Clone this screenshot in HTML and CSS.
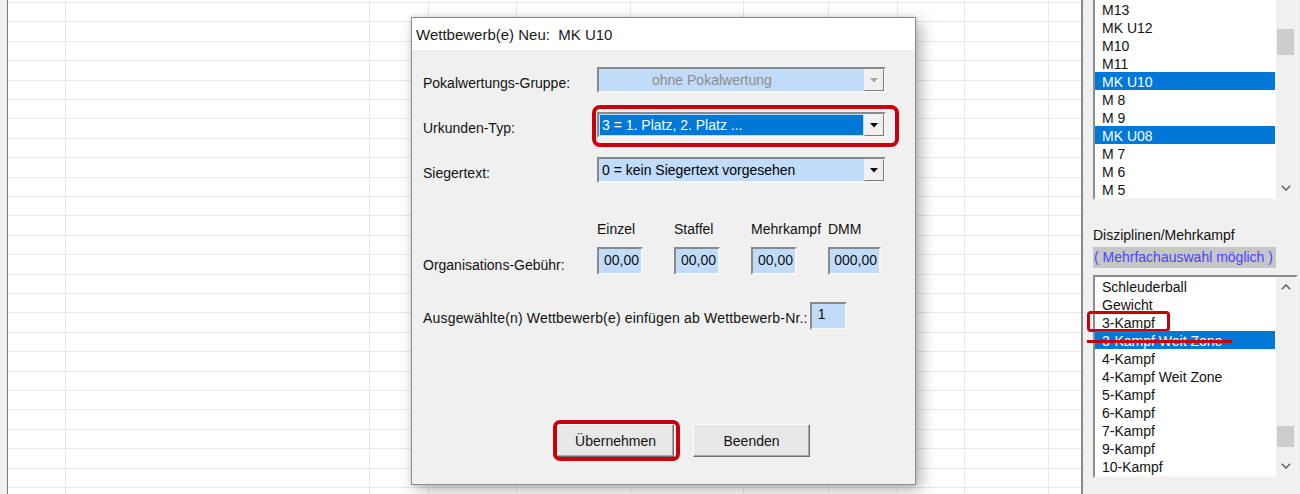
FILE: index.html
```html
<!DOCTYPE html>
<html lang="de">
<head>
<meta charset="utf-8">
<title>Wettbewerb(e) Neu</title>
<link rel="stylesheet" href="styles.css">
</head>
<body>
<div class="app">
  <div class="strip"></div>
  <div class="sheet">
    <div class="col w58"></div>
    <div class="col w304"></div>
    <div class="col w59"></div>
    <div class="col w88"></div>
    <div class="col w114"></div>
    <div class="col w113"></div>
    <div class="col w85"></div>
    <div class="col w69"></div>
    <div class="col w67"></div>
    <div class="col w84"></div>
    <div class="col rest"></div>
  </div>

  <aside class="panel">
    <div class="listbox top-list">
      <ul class="items">
        <li>M13</li>
        <li>MK U12</li>
        <li>M10</li>
        <li>M11</li>
        <li class="sel">MK U10</li>
        <li>M 8</li>
        <li>M 9</li>
        <li class="sel">MK U08</li>
        <li>M 7</li>
        <li>M 6</li>
        <li>M 5</li>
      </ul>
      <div class="scrollbar">
        <div class="track">
          <div class="thumb" style="margin-top:29px;height:26px"></div>
        </div>
        <div class="sb-btn"><svg width="10" height="6" viewBox="0 0 10 6"><polyline points="0.8,0.8 5,5 9.2,0.8" fill="none" stroke="#606060" stroke-width="1.5"/></svg></div>
      </div>
    </div>

    <div class="panel-label">Disziplinen/Mehrkampf</div>
    <div class="hint">( Mehrfachauswahl möglich )</div>

    <div class="listbox bottom-list">
      <ul class="items">
        <li>Schleuderball</li>
        <li>Gewicht</li>
        <li class="marked">3-Kampf<span class="mark mark-item"></span></li>
        <li class="sel">3-Kampf Weit Zone<span class="mark-line"></span></li>
        <li>4-Kampf</li>
        <li>4-Kampf Weit Zone</li>
        <li>5-Kampf</li>
        <li>6-Kampf</li>
        <li>7-Kampf</li>
        <li>9-Kampf</li>
        <li>10-Kampf</li>
      </ul>
      <div class="scrollbar">
        <div class="sb-btn"><svg width="10" height="6" viewBox="0 0 10 6"><polyline points="0.8,5.2 5,1 9.2,5.2" fill="none" stroke="#606060" stroke-width="1.5"/></svg></div>
        <div class="track">
          <div class="thumb" style="margin-top:129px;height:21px"></div>
        </div>
        <div class="sb-btn"><svg width="10" height="6" viewBox="0 0 10 6"><polyline points="0.8,0.8 5,5 9.2,0.8" fill="none" stroke="#606060" stroke-width="1.5"/></svg></div>
      </div>
    </div>
  </aside>

  <div class="dialog">
    <div class="titlebar">Wettbewerb(e) Neu:&nbsp; MK U10</div>
    <div class="dialog-body">
      <div class="row">
        <span class="label">Pokalwertungs-Gruppe:</span>
        <div class="combo disabled">
          <span class="combo-text centered">ohne Pokalwertung</span>
          <span class="combo-btn"><svg width="8" height="5" viewBox="0 0 8 5"><polygon points="0,0 8,0 4,4.5" fill="#a6a6a6"/></svg></span>
        </div>
      </div>
      <div class="row">
        <span class="label">Urkunden-Typ:</span>
        <div class="combo">
          <span class="combo-text selected">3 = 1. Platz, 2. Platz ...</span>
          <span class="combo-btn"><svg width="8" height="5" viewBox="0 0 8 5"><polygon points="0,0 8,0 4,4.5" fill="#000"/></svg></span>
          <span class="mark mark-combo"></span>
        </div>
      </div>
      <div class="row">
        <span class="label">Siegertext:</span>
        <div class="combo">
          <span class="combo-text">0 = kein Siegertext vorgesehen</span>
          <span class="combo-btn"><svg width="8" height="5" viewBox="0 0 8 5"><polygon points="0,0 8,0 4,4.5" fill="#000"/></svg></span>
        </div>
      </div>

      <div class="fees">
        <span></span>
        <span class="fee-head">Einzel</span>
        <span class="fee-head">Staffel</span>
        <span class="fee-head">Mehrkampf</span>
        <span class="fee-head">DMM</span>
        <span class="label fee-label">Organisations-Gebühr:</span>
        <span class="field fee">00,00</span>
        <span class="field fee">00,00</span>
        <span class="field fee">00,00</span>
        <span class="field fee wide">000,00</span>
      </div>

      <div class="insert-row">
        <span class="label long">Ausgewählte(n) Wettbewerb(e) einfügen ab Wettbewerb-Nr.:</span>
        <span class="field nr">1</span>
      </div>

      <div class="buttons">
        <div class="btn">Übernehmen<span class="mark mark-btn"></span></div>
        <div class="btn">Beenden</div>
      </div>
    </div>
  </div>
</div>
</body>
</html>
```

FILE: styles.css
```css
* { box-sizing: border-box; }

html, body {
  margin: 0;
  padding: 0;
  width: 1300px;
  height: 494px;
  overflow: hidden;
  background: #f0f0f0;
  font-family: "Liberation Sans", Arial, sans-serif;
  font-size: 14px;
  color: #000;
}

.app {
  position: relative;
  display: flex;
  width: 1300px;
  height: 494px;
}

/* ---------- spreadsheet background ---------- */
.strip {
  width: 8px;
  flex: none;
  background: #f0f0f0;
  border-right: 1px solid #7a7a7a;
}

.sheet {
  flex: none;
  width: 1073px;
  display: flex;
  background-color: #fff;
  background-image: repeating-linear-gradient(to bottom,
      transparent 0, transparent 2px,
      #e9e9e9 2px, #e9e9e9 3px,
      transparent 3px, transparent 19.4px);
}

.col { flex: none; height: 100%; border-right: 1px solid #e8e8e8; }
.w58 { width: 58px; }
.w304 { width: 304px; }
.w59 { width: 59px; }
.w88 { width: 88px; }
.w114 { width: 114px; }
.w113 { width: 113px; }
.w85 { width: 85px; }
.w69 { width: 69px; }
.w67 { width: 67px; }
.w84 { width: 84px; }
.rest { flex: 1; border-right: 0; }

/* ---------- right panel ---------- */
.panel {
  position: relative;
  flex: none;
  width: 219px;
  border-left: 2px solid #8a8a8a;
  background: #f0f0f0;
  padding-left: 10px;
  display: flex;
  flex-direction: column;
}

.listbox {
  position: relative;
  width: 205px;
  display: flex;
  background: #fff;
  border: 2px solid;
  border-color: #8c8c8c #f4f4f4 #f4f4f4 #8c8c8c;
}

.top-list {
  height: 200px;
  border-top: 0;
}

.bottom-list {
  height: 203px;
  margin-top: 7px;
}

.items {
  list-style: none;
  margin: 0;
  padding: 0;
  width: 181px;
  flex: none;
}

.items li {
  position: relative;
  height: 18px;
  line-height: 20px;
  padding-left: 7px;
  white-space: nowrap;
  color: #111;
}

.items li.sel {
  background: #0078d7;
  color: #fff;
  margin-right: 1px;
}

.scrollbar {
  flex: 1;
  display: flex;
  flex-direction: column;
  background: #f0f0f0;
}

.track { flex: 1; }

.thumb {
  margin-left: 1px;
  margin-right: 2px;
  background: #cdcdcd;
}

.sb-btn {
  height: 20px;
  display: flex;
  align-items: center;
  justify-content: center;
  flex: none;
}

.panel-label {
  margin-top: 27px;
  line-height: 16px;
  color: #111;
}

.hint {
  margin-top: 4px;
  width: 183px;
  height: 21px;
  line-height: 21px;
  background: #c6c6c6;
  color: #4646ff;
  padding-left: 1px;
  white-space: nowrap;
}

/* ---------- annotation marks ---------- */
.mark {
  position: absolute;
  border: 3px solid #c8000a;
  border-radius: 6px;
  pointer-events: none;
}

.mark-item {
  left: -8px;
  top: -2px;
  width: 83px;
  height: 21px;
  border-radius: 4px;
}

.mark-line {
  position: absolute;
  left: -8px;
  top: 9px;
  width: 145px;
  height: 3px;
  background: #c8000a;
}

.mark-combo {
  left: -7px;
  top: -9px;
  width: 307px;
  height: 42px;
  border-width: 4px;
  border-radius: 8px;
}

.mark-btn {
  left: -5px;
  top: -5px;
  width: 127px;
  height: 41px;
  border-width: 4px;
  border-radius: 7px;
}

/* ---------- dialog ---------- */
.dialog {
  position: absolute;
  left: 411px;
  top: 17px;
  width: 505px;
  height: 468px;
  border: 1px solid #8c8c8c;
  background: #f0f0f0;
  box-shadow: 5px 5px 15px rgba(0, 0, 0, 0.3), 0 0 4px rgba(0, 0, 0, 0.12);
  display: flex;
  flex-direction: column;
}

.titlebar {
  height: 32px;
  flex: none;
  background: #fff;
  padding: 2px 0 0 4px;
  line-height: 30px;
  font-size: 15px;
  color: #1a1a1a;
  white-space: nowrap;
}

.dialog-body {
  flex: 1;
  padding: 17px 0 0 11px;
  display: flex;
  flex-direction: column;
}

.row {
  display: grid;
  grid-template-columns: 174px 289px;
  align-items: center;
}

.row + .row { margin-top: 19px; }

.label {
  padding-top: 5px;
  white-space: nowrap;
  color: #111;
}

.label.long { letter-spacing: 0.18px; }

.combo {
  position: relative;
  height: 26px;
  display: flex;
  padding: 1px;
  background: #c1dcf9;
  border: 2px solid;
  border-color: #8a8a8a #f6f6f6 #f6f6f6 #8a8a8a;
}

.combo-text {
  flex: 1;
  line-height: 21px;
  padding-left: 2px;
  white-space: nowrap;
  overflow: hidden;
}

.combo-text.selected {
  background: #0078d7;
  color: #fff;
}

.combo-text.centered {
  padding-left: 52px;
  color: #8c8c8c;
}

.combo-btn {
  width: 20px;
  flex: none;
  margin: -1px -1px -1px 1px;
  background: #f0f0f0;
  border: 1px solid;
  border-color: #f0f0f0 #7a7a7a #7a7a7a #f0f0f0;
  display: flex;
  align-items: center;
  justify-content: center;
}

/* fee grid */
.fees {
  margin-top: 38px;
  display: grid;
  grid-template-columns: 143px 46px 46px 46px 53px;
  grid-template-rows: 16px 28px;
  column-gap: 31px;
  row-gap: 10px;
  align-items: center;
}

.fee-head {
  line-height: 16px;
  white-space: nowrap;
  color: #111;
}

.fee-label { padding-top: 8px; }

.field {
  height: 28px;
  background: #c1dcf9;
  border: 2px solid;
  border-color: #8a8a8a #f6f6f6 #f6f6f6 #8a8a8a;
  color: #111;
}

.fee {
  text-align: right;
  padding-right: 2px;
  line-height: 22px;
}

.insert-row {
  margin-top: 27px;
  display: flex;
  align-items: center;
  gap: 2px;
}

.insert-row .label { padding-top: 4px; }

.nr {
  width: 37px;
  padding-left: 6px;
  line-height: 20px;
}

.buttons {
  margin-top: 94px;
  padding-left: 134px;
  display: flex;
  gap: 19px;
}

.btn {
  position: relative;
  width: 117px;
  height: 33px;
  display: flex;
  align-items: center;
  justify-content: center;
  background: #e8e8e8;
  border: 1px solid;
  border-color: #fdfdfd #6e6e6e #6e6e6e #fdfdfd;
  box-shadow: inset -1px -1px 0 #a8a8a8;
  color: #111;
}
```
